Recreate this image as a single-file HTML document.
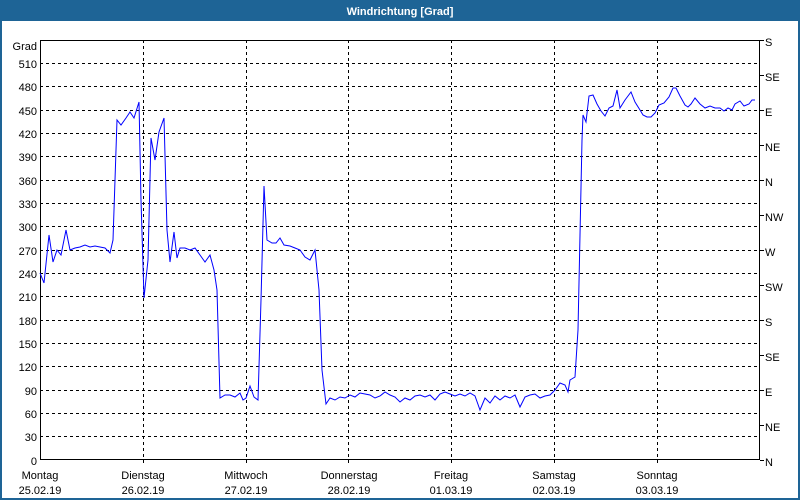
<!DOCTYPE html>
<html><head><meta charset="utf-8"><style>
html,body{margin:0;padding:0;width:800px;height:500px;overflow:hidden;background:#fff;}
</style></head><body>
<svg width="800" height="500" xmlns="http://www.w3.org/2000/svg" font-family="Liberation Sans, sans-serif" font-size="11">
<rect x="0" y="0" width="800" height="500" fill="#1e6496"/>
<rect x="2" y="21" width="796" height="477" fill="#fff"/>
<text x="400" y="15" fill="#fff" font-weight="bold" text-anchor="middle" font-size="11">Windrichtung [Grad]</text>
<g stroke="#000" stroke-dasharray="3,3" stroke-width="1" shape-rendering="crispEdges">
<line x1="40" x2="760" y1="63.5" y2="63.5"/><line x1="40" x2="760" y1="86.5" y2="86.5"/><line x1="40" x2="760" y1="110.5" y2="110.5"/><line x1="40" x2="760" y1="133.5" y2="133.5"/><line x1="40" x2="760" y1="156.5" y2="156.5"/><line x1="40" x2="760" y1="180.5" y2="180.5"/><line x1="40" x2="760" y1="203.5" y2="203.5"/><line x1="40" x2="760" y1="226.5" y2="226.5"/><line x1="40" x2="760" y1="250.5" y2="250.5"/><line x1="40" x2="760" y1="273.5" y2="273.5"/><line x1="40" x2="760" y1="296.5" y2="296.5"/><line x1="40" x2="760" y1="320.5" y2="320.5"/><line x1="40" x2="760" y1="343.5" y2="343.5"/><line x1="40" x2="760" y1="366.5" y2="366.5"/><line x1="40" x2="760" y1="390.5" y2="390.5"/><line x1="40" x2="760" y1="413.5" y2="413.5"/><line x1="40" x2="760" y1="436.5" y2="436.5"/>
<line x1="143.5" x2="143.5" y1="40" y2="465"/><line x1="246.5" x2="246.5" y1="40" y2="465"/><line x1="348.5" x2="348.5" y1="40" y2="465"/><line x1="451.5" x2="451.5" y1="40" y2="465"/><line x1="554.5" x2="554.5" y1="40" y2="465"/><line x1="657.5" x2="657.5" y1="40" y2="465"/>
</g>
<rect x="40.5" y="40.5" width="719" height="419" fill="none" stroke="#000" shape-rendering="crispEdges"/>
<g stroke="#000" shape-rendering="crispEdges">
<line x1="760" x2="764" y1="40.5" y2="40.5"/><line x1="760" x2="764" y1="75.5" y2="75.5"/><line x1="760" x2="764" y1="110.5" y2="110.5"/><line x1="760" x2="764" y1="145.5" y2="145.5"/><line x1="760" x2="764" y1="180.5" y2="180.5"/><line x1="760" x2="764" y1="215.5" y2="215.5"/><line x1="760" x2="764" y1="250.5" y2="250.5"/><line x1="760" x2="764" y1="285.5" y2="285.5"/><line x1="760" x2="764" y1="320.5" y2="320.5"/><line x1="760" x2="764" y1="355.5" y2="355.5"/><line x1="760" x2="764" y1="390.5" y2="390.5"/><line x1="760" x2="764" y1="425.5" y2="425.5"/><line x1="760" x2="764" y1="460.5" y2="460.5"/>
</g>
<g text-anchor="end">
<text x="37" y="50">Grad</text>
<text x="37" y="68">510</text><text x="37" y="91">480</text><text x="37" y="115">450</text><text x="37" y="138">420</text><text x="37" y="161">390</text><text x="37" y="185">360</text><text x="37" y="208">330</text><text x="37" y="231">300</text><text x="37" y="255">270</text><text x="37" y="278">240</text><text x="37" y="301">210</text><text x="37" y="325">180</text><text x="37" y="348">150</text><text x="37" y="371">120</text><text x="37" y="395">90</text><text x="37" y="418">60</text><text x="37" y="441">30</text><text x="37" y="465">0</text>
</g>
<g>
<text x="765" y="46">S</text><text x="765" y="81">SE</text><text x="765" y="116">E</text><text x="765" y="151">NE</text><text x="765" y="186">N</text><text x="765" y="221">NW</text><text x="765" y="256">W</text><text x="765" y="291">SW</text><text x="765" y="326">S</text><text x="765" y="361">SE</text><text x="765" y="396">E</text><text x="765" y="431">NE</text><text x="765" y="466">N</text>
</g>
<g text-anchor="middle">
<text x="40" y="479">Montag</text><text x="40" y="494">25.02.19</text>
<text x="143" y="479">Dienstag</text><text x="143" y="494">26.02.19</text>
<text x="246" y="479">Mittwoch</text><text x="246" y="494">27.02.19</text>
<text x="349" y="479">Donnerstag</text><text x="349" y="494">28.02.19</text>
<text x="451" y="479">Freitag</text><text x="451" y="494">01.03.19</text>
<text x="554" y="479">Samstag</text><text x="554" y="494">02.03.19</text>
<text x="657" y="479">Sonntag</text><text x="657" y="494">03.03.19</text>
</g>
<polyline fill="none" stroke="#0000ff" stroke-width="1" points="40,273 44,283 49,235 53,262 57,250 61,255 66,230 70,250 75,248 80,247 85,245 90,247 95,246 100,247 105,248 110,253 113,240 117,120 121,125 126,118 130,112 134,118 139,102 141,200 144,298 148,260 151,138 155,160 159,132 164,118 167,230 170,262 174,232 177,258 180,248 185,248 190,250 195,248 200,255 205,262 210,255 214,270 217,290 220,398 225,395 230,395 235,397 240,393 243,400 246,398 250,386 254,397 258,400 261,300 264,186 267,240 272,243 276,243 280,238 284,245 290,246 295,248 300,250 305,257 310,260 315,250 319,290 322,370 326,404 330,398 335,400 340,397 345,398 350,395 355,397 360,393 365,394 370,395 375,398 380,396 385,392 390,395 395,397 400,402 405,398 410,400 415,396 420,395 425,397 430,395 435,400 440,394 445,392 450,394 455,396 460,394 465,396 470,393 475,396 480,410 485,398 490,403 495,396 500,400 505,396 510,398 515,395 520,407 525,397 530,395 535,394 540,398 545,396 550,395 555,390 560,383 565,385 568,392 570,380 575,377 578,330 582,140 583,115 586,122 589,96 593,95 597,104 601,111 605,116 609,108 613,106 617,90 620,108 625,100 631,92 635,102 640,110 643,115 647,117 651,117 655,113 659,105 664,103 669,97 673,88 676,88 680,96 685,105 688,107 691,104 695,98 700,104 705,108 710,106 715,108 720,108 724,111 728,108 732,110 735,104 740,101 744,106 749,104 752,100 755,100"/>
</svg>
</body></html>
